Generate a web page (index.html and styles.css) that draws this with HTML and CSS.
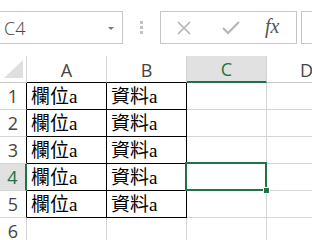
FILE: index.html
```html
<!DOCTYPE html>
<html lang="zh-Hant">
<head>
    <meta charset="UTF-8">
    <meta name="viewport" content="width=device-width, initial-scale=1.0">
    <title>Sheet</title>
    <link rel="stylesheet" href="styles.css">
</head>
<body>
    <div class="toolbar">
        <div class="name-box">
            <span class="cell-ref">C4</span>
            <span class="drop"></span>
        </div>
        <div class="grip"><i></i><i></i><i></i></div>
        <div class="formula-box">
            <svg class="ico" width="16" height="14" viewBox="0 0 16 14">
                <path d="M2 1 L14 13 M14 1 L2 13" stroke="#b4b4b4" stroke-width="1.6" fill="none"/>
            </svg>
            <svg class="ico" width="18" height="14" viewBox="0 0 18 14">
                <path d="M1 7 L6 12 L17 1" stroke="#b4b4b4" stroke-width="2" fill="none"/>
            </svg>
            <span class="fx">fx</span>
        </div>
        <div class="formula-input"></div>
    </div>

    <div class="sheet">
        <div class="corner"><span class="tri"></span></div>
        <div class="col-head dark">A</div>
        <div class="col-head dark">B</div>
        <div class="col-head active">C</div>
        <div class="col-head">D</div>

        <div class="row-head dark">1</div>
        <div class="cell boxed">欄位a</div>
        <div class="cell boxed">資料a</div>
        <div class="cell"></div>
        <div class="cell"></div>

        <div class="row-head dark">2</div>
        <div class="cell boxed">欄位a</div>
        <div class="cell boxed">資料a</div>
        <div class="cell"></div>
        <div class="cell"></div>

        <div class="row-head dark">3</div>
        <div class="cell boxed">欄位a</div>
        <div class="cell boxed">資料a</div>
        <div class="cell"></div>
        <div class="cell"></div>

        <div class="row-head active">4</div>
        <div class="cell boxed">欄位a</div>
        <div class="cell boxed">資料a</div>
        <div class="cell selected"><span class="handle"></span></div>
        <div class="cell"></div>

        <div class="row-head dark">5</div>
        <div class="cell boxed">欄位a</div>
        <div class="cell boxed">資料a</div>
        <div class="cell"></div>
        <div class="cell"></div>

        <div class="row-head">6</div>
        <div class="cell"></div>
        <div class="cell"></div>
        <div class="cell"></div>
        <div class="cell"></div>
    </div>
</body>
</html>
```

FILE: styles.css
```css
body {
    margin: 0;
    background: #fff;
    overflow: hidden;
    font-family: "Open Sans", "Noto Sans", sans-serif;
}

.toolbar {
    height: 56px;
    display: flex;
    align-items: flex-start;
    padding-top: 11px;
    box-sizing: border-box;
}

.name-box {
    width: 124px;
    height: 33px;
    margin-left: -1px;
    border: 1px solid #c6c6c6;
    box-sizing: border-box;
    display: flex;
    align-items: center;
    justify-content: space-between;
    padding: 0 8px 0 4px;
}

.cell-ref {
    font-size: 18px;
    font-weight: 300;
    color: #444;
}

.drop {
    width: 0;
    height: 0;
    border-left: 3px solid transparent;
    border-right: 3px solid transparent;
    border-top: 3px solid #777;
    margin-top: 1px;
}

.grip {
    width: 37px;
    height: 33px;
    display: flex;
    flex-direction: column;
    align-items: center;
    justify-content: center;
    gap: 2px;
}

.grip i {
    width: 3px;
    height: 3px;
    background: #c2c2c2;
}

.formula-box {
    width: 137px;
    height: 33px;
    border: 1px solid #c6c6c6;
    box-sizing: border-box;
    display: flex;
    align-items: center;
    padding-left: 15px;
    gap: 0;
}

.formula-box .ico:nth-child(1) {
    margin-right: 30px;
}

.formula-box .ico:nth-child(2) {
    margin-right: 25px;
}

.fx {
    font-family: "Liberation Serif", serif;
    font-style: italic;
    font-size: 20px;
    color: #555;
    margin-top: -2px;
}

.formula-input {
    flex: 1;
    height: 33px;
    margin-left: 4px;
    border: 1px solid #c6c6c6;
    border-right: 0;
    box-sizing: border-box;
}

.sheet {
    display: grid;
    grid-template-columns: 27px 80px 80px 80px 80px;
    grid-auto-rows: 27px;
}

.corner,
.col-head,
.row-head,
.cell {
    box-sizing: border-box;
    border-right: 1px solid #d4d4d4;
    border-bottom: 1px solid #d4d4d4;
}

.corner {
    position: relative;
    border-bottom-color: #c6c6c6;
}

.tri {
    position: absolute;
    left: 4px;
    top: 4px;
    width: 0;
    height: 0;
    border-left: 19px solid transparent;
    border-bottom: 18px solid #dfdfdf;
}

.col-head {
    border-bottom-color: #c6c6c6;
    display: flex;
    align-items: center;
    justify-content: center;
    font-size: 18px;
    color: #444;
    padding-top: 1px;
}

.col-head.dark {
    border-bottom-color: #000;
}

.col-head.active {
    background: #e1e1e1;
    color: #217346;
    border-bottom: 2px solid #217346;
}

.row-head {
    display: flex;
    align-items: center;
    justify-content: center;
    font-size: 18px;
    color: #444;
}

.row-head.dark {
    border-right-color: #000;
}

.row-head.active {
    background: #e1e1e1;
    color: #217346;
    border-right: 2px solid #217346;
}

.cell {
    display: flex;
    align-items: flex-end;
    padding: 0 0 1px 4px;
    font-family: "Liberation Serif", "Noto Sans CJK TC", serif;
    font-size: 19px;
    line-height: 22px;
    color: #000;
}

.cell.boxed {
    border-right-color: #000;
    border-bottom-color: #000;
}

.cell.selected {
    position: relative;
}

.cell.selected::after {
    content: "";
    position: absolute;
    left: -2px;
    top: -2px;
    right: -1px;
    bottom: -1px;
    border: 2px solid #217346;
}

.handle {
    position: absolute;
    right: -4px;
    bottom: -4px;
    width: 5px;
    height: 5px;
    background: #217346;
    border: 1px solid #fff;
    z-index: 1;
}
```
